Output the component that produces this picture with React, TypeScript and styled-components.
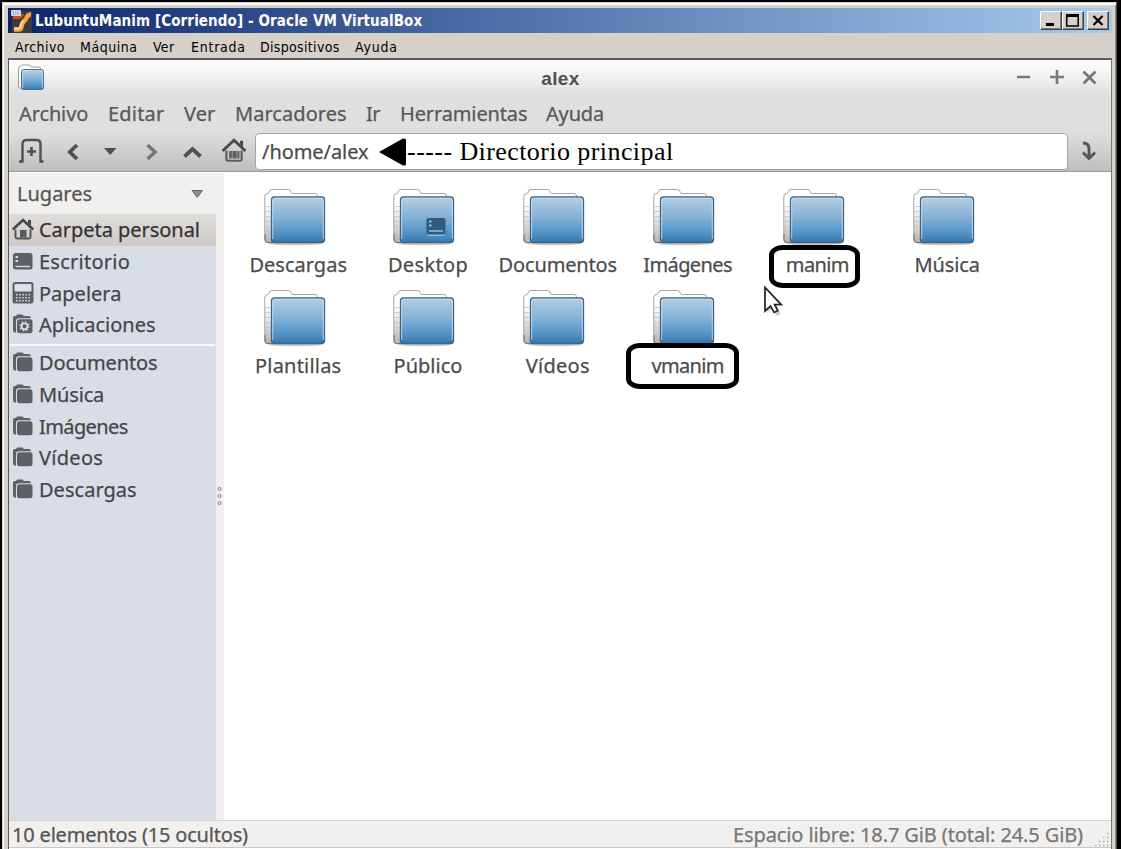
import React from 'react';
import styled, { createGlobalStyle } from 'styled-components';

const GlobalStyle = createGlobalStyle`
  * { box-sizing: border-box; }
  body { margin: 0; background: #000; overflow: hidden; }
`;

const Desktop = styled.div`
  width: 1121px;
  height: 849px;
  padding: 2px 4px 0 2px;
  background: #000;
  overflow: hidden;
`;

const HostWindow = styled.div`
  height: 860px;
  padding: 3px 2px 0 3px;
  background: #d5d0c8;
  border: solid;
  border-width: 1px 1px 0 1px;
  border-color: #d5d0c8 #55534f #000 #d5d0c8;
  box-shadow: inset 1px 2px 0 #fff, inset -1px 0 0 #8a8782;
`;

const HostTitleBar = styled.div`
  display: flex;
  align-items: center;
  height: 25px;
  margin: 2px 2px 0 2px;
  padding: 0 3px 0 2px;
  background: linear-gradient(90deg, #0b256c, #a6caf0);
`;

const HostTitle = styled.h1`
  flex: 1;
  margin: 2px 0 0 2px;
  color: #fff;
  font: bold 15px/25px 'DejaVu Sans Condensed', 'DejaVu Sans', sans-serif;
  letter-spacing: 0.1px;
  white-space: nowrap;
`;

const CaptionButton = styled.button<{ $gap?: boolean }>`
  display: block;
  width: 22px;
  height: 19px;
  padding: 0;
  margin-left: ${(p) => (p.$gap ? 3 : 0)}px;
  background: #d5d0c8;
  border: 1px solid;
  border-color: #fff #404040 #404040 #fff;
  box-shadow: inset -1px -1px 0 #808080;
  svg { display: block; }
`;

const HostMenu = styled.nav`
  display: flex;
  height: 25px;
  padding-left: 9px;
  color: #000;
  font: 14px/28px 'DejaVu Sans Condensed', 'DejaVu Sans', sans-serif;
`;

const HostMenuItem = styled.span<{ $w: number; $ls: number }>`
  width: ${(p) => p.$w}px;
  letter-spacing: ${(p) => p.$ls}px;
  white-space: nowrap;
`;

const Guest = styled.div`
  display: flex;
  flex-direction: column;
  height: 791px;
  margin: 0 2px 0 2px;
  border: 1px solid #5c5b5a;
  border-width: 2px 1px 0 1px;
  border-right-color: #777;
  background: #fff;
  color: #4c4c4c;
  font: 20px/32px 'Noto Sans', sans-serif;
  -webkit-text-stroke: 0.25px;
`;

const GuestTitleBar = styled.header`
  display: flex;
  align-items: center;
  height: 34px;
  padding: 0 13px 0 8px;
  background: linear-gradient(#fff, #f4f4f4 40%, #e0e0e0);
`;

const GuestTitle = styled.h2`
  flex: 1;
  margin: 4px 0 0 11px;
  padding-left: 49px;
  text-align: center;
  color: #505050;
  font: bold 19px/32px 'Liberation Sans', sans-serif;
  letter-spacing: 0.4px;
  -webkit-text-stroke: 0;
`;

const GuestMenu = styled.nav`
  display: flex;
  height: 38px;
  padding: 4px 0 0 10px;
  background: #dfdfdf;
  color: #585858;
`;

const GuestMenuItem = styled.span<{ $w: number; $ls: number }>`
  width: ${(p) => p.$w}px;
  letter-spacing: ${(p) => p.$ls}px;
  line-height: 32px;
  white-space: nowrap;
`;

const Toolbar = styled.div`
  display: flex;
  align-items: center;
  height: 40px;
  padding-right: 43px;
  background: linear-gradient(#dfdfdf, #bebebe);
  border-bottom: 1px solid #999;
  position: relative;
`;

const ToolIcons = styled.div`
  width: 246px;
  height: 39px;
  svg { display: block; }
`;

const PathField = styled.div`
  flex: 1;
  display: flex;
  align-items: center;
  position: relative;
  height: 37px;
  margin-top: -1px;
  padding: 1px 0 0 6px;
  background: #fff;
  border: 1px solid #a5a5a5;
  border-radius: 4px;
  letter-spacing: -0.06px;
  color: #4b4b4b;
`;

const PathNote = styled.div`
  position: absolute;
  left: 123px;
  top: 0;
  height: 35px;
  padding-left: 19px;
  color: #000;
  font: 26px/35px 'Liberation Serif', serif;
  letter-spacing: 0.42px;
  white-space: nowrap;
  -webkit-text-stroke: 0;
  svg { position: absolute; left: 0; top: 4px; }
`;

const GoIcon = styled.svg`
  position: absolute;
  right: 13px;
  top: 7px;
`;

const Body = styled.div`
  display: flex;
  height: 647px;
  margin-top: 1px;
`;

const Sidebar = styled.aside`
  width: 215px;
  padding-right: 8px;
  background: #f1f0ee;
  position: relative;
`;

const PlacesHeader = styled.div`
  display: flex;
  align-items: center;
  justify-content: space-between;
  height: 41px;
  padding: 1px 12px 0 8px;
  color: #555;
`;

const PlacesList = styled.div`
  height: 606px;
  background: #d9dee6;
`;

const Place = styled.div<{ $active?: boolean; $ls: number }>`
  display: flex;
  align-items: center;
  gap: 4px;
  height: 31.8px;
  padding-left: 3px;
  background: ${(p) => (p.$active ? 'linear-gradient(#dedcda, #cfcac6)' : 'transparent')};
  color: ${(p) => (p.$active ? '#333' : '#464646')};
  letter-spacing: ${(p) => p.$ls}px;
  white-space: nowrap;
`;

const Separator = styled.div`
  height: 2px;
  margin: 3px 1px 1px;
  background: #fafafa;
`;

const Grip = styled.svg`
  position: absolute;
  right: 0;
  top: 312px;
`;

const Files = styled.main`
  display: grid;
  grid-template-columns: repeat(6, 129.8px);
  grid-auto-rows: 100.7px;
  align-content: start;
  flex: 1;
  padding: 15px 0 0 9.3px;
  background: #fff;
`;

const File = styled.div<{ $ls: number }>`
  display: flex;
  flex-direction: column;
  align-items: center;
  position: relative;
  letter-spacing: ${(p) => p.$ls}px;
`;

const FileName = styled.span`
  margin-top: 2px;
  line-height: 32px;
  white-space: nowrap;
`;

const Ring = styled.div<{ $x: number; $w: number; $h: number; $y: number }>`
  position: absolute;
  left: ${(p) => p.$x}px;
  top: ${(p) => p.$y}px;
  width: ${(p) => p.$w}px;
  height: ${(p) => p.$h}px;
  border: 5px solid #000;
  border-radius: 14px / 10px;
`;

const Pointer = styled.svg`
  position: absolute;
  left: 762px;
  top: 284px;
`;

const StatusBar = styled.footer`
  display: flex;
  justify-content: space-between;
  height: 28px;
  padding: 0 28px 0 3px;
  background: #f1f0ee;
  border-bottom: 1px solid #c9c8c6;
  box-shadow: inset 0 1px 0 #d2d1cf;
  line-height: 29px;
  color: #555;
  position: relative;
`;

const StatusText = styled.span<{ $ls: number; $dim?: boolean }>`
  letter-spacing: ${(p) => p.$ls}px;
  color: ${(p) => (p.$dim ? '#777' : '#555')};
  white-space: nowrap;
`;

const SizeGrip = styled.svg`
  position: absolute;
  right: 1px;
  bottom: 0;
`;

function FolderDefs() {
  return (
    <defs>
      <linearGradient id="blue" x1="0" y1="0" x2="0" y2="1">
        <stop offset="0" stopColor="#b3cee4" />
        <stop offset="0.45" stopColor="#84b1d5" />
        <stop offset="0.75" stopColor="#5797c9" />
        <stop offset="1" stopColor="#3777aa" />
      </linearGradient>
      <linearGradient id="spine" x1="0" y1="0" x2="0" y2="1">
        <stop offset="0.3" stopColor="#fff" />
        <stop offset="1" stopColor="#b5b5b5" />
      </linearGradient>
    </defs>
  );
}

function Folder({ desktop }: { desktop?: boolean }) {
  return (
    <svg width="69" height="59" viewBox="0 0 69 59">
      <FolderDefs />
      <ellipse cx="31" cy="55.5" rx="27" ry="1.8" fill="#000" opacity="0.22" />
      <path d="M.8 52V8.500q0-3 3-3q1.200 0 1.700-2.500q.4-1.500 2.500-1.500h16.500q2 0 2.400 1.800q.4 2.200 2 2.200h22q2.600 0 2.600 2.500V50H7v4.500H3.500Q.8 54.500.8 52z" fill="url(#spine)" stroke="#a4a4a4" />
      <path d="M1.500 18.500h5M1.500 23.500h5M1.500 28.500h5M1.500 33.500h5M1.500 38.500h5M1.500 43.500h5" stroke="#c9c9c9" />
      <path d="M1 46v5.500q0 3 3 3h5" fill="none" stroke="#6d737a" />
      <rect x="7.500" y="9" width="53" height="45.500" rx="3" fill="url(#blue)" stroke="#3c6486" strokeWidth="1.300" />
      <path d="M8.700 51V12q0-1.800 1.800-1.800h47q1.800 0 1.800 1.800v39" fill="none" stroke="#d4e5f3" strokeOpacity="0.75" />
      {desktop && (
        <g>
          <rect x="33.500" y="30" width="19" height="16" rx="2" fill="#315b7d" />
          <path d="M35 47.500h16.500" stroke="#8fbbdc" />
          <path d="M36 33.500h2.500M36 37.500h2.500" stroke="#9cc3e1" strokeWidth="2.200" />
          <path d="M36 43h14" stroke="#9cc3e1" strokeWidth="1.500" />
        </g>
      )}
    </svg>
  );
}

function TitleFolder() {
  return (
    <svg width="28" height="28" viewBox="0 0 28 28">
      <path d="M1.500 24V5.500q0-2 2-2l1-1.500h8l1.500 2h7.500q2 0 2 2V25h-20q-2 0-2-1z" fill="#fff" stroke="#9b9b9b" />
      <rect x="4.500" y="6.500" width="22" height="20" rx="2" fill="url(#blue)" stroke="#4a7294" />
      <path d="M5.700 25V7.700h19.600V25" fill="none" stroke="#cde0f0" strokeOpacity=".7" />
    </svg>
  );
}

type PlaceKind = 'home' | 'desktop' | 'trash' | 'apps' | 'folder';

function HomeShape() {
  return (
    <g>
      <path d="M1 12.500L11.500 2.500L22 12.500" fill="none" stroke="#4b4b4b" strokeWidth="2.600" />
      <path d="M17 3h2.800v6L17 6.500z" fill="#4b4b4b" />
      <path d="M4.500 12v8q0 1.500 1.500 1.500h11q1.500 0 1.500-1.500v-8" fill="none" stroke="#5c5c5c" strokeWidth="2" />
      <path d="M7 12.500h2.500v7H7zM10 12.500h4v7h-4zM14.500 12.500H16.500v7h-2z" fill="#606060" />
    </g>
  );
}

function PlaceIcon({ kind }: { kind: PlaceKind }) {
  return (
    <svg width="23" height="24" viewBox="0 0 23 24">
      {kind === 'home' && (
        <g>
          <path d="M.8 11.500L11 2L21.200 11.500" fill="none" stroke="#464646" strokeWidth="2.500" />
          <path d="M16 2h3v6l-3-3z" fill="#464646" />
          <path d="M3.500 11.500v7.500q0 1.500 1.500 1.500h12q1.500 0 1.500-1.500V11.500" fill="none" stroke="#555" strokeWidth="1.900" />
          <path d="M8 12h6.500V19.500H8z" fill="#5a5a5a" />
        </g>
      )}
      {kind === 'desktop' && (
        <g>
          <rect x="1" y="3" width="19.500" height="16.500" rx="2.500" fill="#5f6062" />
          <path d="M3.500 7H6M3.500 11H6" stroke="#d9dee6" strokeWidth="2" />
          <path d="M3.500 16.500h14.500" stroke="#d9dee6" strokeWidth="1.400" />
        </g>
      )}
      {kind === 'trash' && (
        <g>
          <path d="M3 1h16q2.500 0 2.500 2.500V20q0 2.500-2.500 2.500H3Q.5 22.500.5 20V3.500Q.5 1 3 1z" fill="#5f6062" />
          <rect x="2.500" y="3" width="17" height="7.500" rx="1" fill="#dce0e7" />
          <path d="M4 13.800h14M4 16.800h14M4 19.800h14" stroke="#d9dee6" strokeWidth="1.500" strokeDasharray="1.500 1.600" />
        </g>
      )}
      {(kind === 'folder' || kind === 'apps') && (
        <g>
          <path d="M1 17V5Q1 3 3 3h1l1-1.500h5.500L12 3h4.500q2.500 0 2.500 2.300H7Q4 5.300 4 8v11.800Q1 19.800 1 17z" fill="#5f6062" />
          <rect x="5" y="6.300" width="15.500" height="14" rx="2.500" fill="#5f6062" />
          {kind === 'apps' && (
            <g fill="none" stroke="#d9dee6">
              <circle cx="12.500" cy="13.300" r="3" strokeWidth="1.800" />
              <circle cx="12.500" cy="13.300" r="4.400" strokeWidth="1.200" strokeDasharray="1.500 1.960" />
            </g>
          )}
        </g>
      )}
    </svg>
  );
}

const hostMenu: [string, number, number][] = [
  ['Archivo', 65, 0.4],
  ['Máquina', 73, 0.55],
  ['Ver', 38, 0.3],
  ['Entrada', 69, 0.75],
  ['Dispositivos', 95, 0.33],
  ['Ayuda', 60, 0.8],
];

const guestMenu: [string, number, number][] = [
  ['Archivo', 89, -0.12],
  ['Editar', 76, 0.2],
  ['Ver', 51, 0.06],
  ['Marcadores', 131, 0.05],
  ['Ir', 34, -0.6],
  ['Herramientas', 146, -0.13],
  ['Ayuda', 70, -0.16],
];

const places: [string, PlaceKind, number][] = [
  ['Carpeta personal', 'home', -0.04],
  ['Escritorio', 'desktop', 0.25],
  ['Papelera', 'trash', 0],
  ['Aplicaciones', 'apps', 0.03],
];

const bookmarks: [string, number][] = [
  ['Documentos', -0.15],
  ['Música', -0.15],
  ['Imágenes', -0.6],
  ['Vídeos', 0.3],
  ['Descargas', 0.02],
];

const files: [string, number][] = [
  ['Descargas', 0.02],
  ['Desktop', 0.35],
  ['Documentos', -0.15],
  ['Imágenes', -0.6],
  ['manim', -0.6],
  ['Música', -0.1],
  ['Plantillas', 0.2],
  ['Público', 0],
  ['Vídeos', 0.3],
  ['vmanim', -0.7],
];

export default function App() {
  return (
    <Desktop>
      <GlobalStyle />
      <HostWindow>
        <HostTitleBar>
          <svg width="23" height="24" viewBox="0 0 23 24">
            <rect x="2" y="2" width="20" height="22" fill="#3a3b41" />
            <path d="M3 8h4q4 0 5-3" fill="none" stroke="#d9481c" strokeWidth="4" />
            <path d="M4 20.500h4.500q2.500 0 3-3t2.500-5.500q2-1.500 3-4t4-2.500" fill="none" stroke="#f5a63c" strokeWidth="4.600" />
            <path d="M4 19.500h4.500q1.500 0 2-2.500t2.500-5.500" fill="none" stroke="#fbd9a4" strokeWidth="1.800" />
            <rect x="1" y="1" width="10" height="6" rx="1" fill="#d3d8e2" />
            <path d="M2.500 3h7M2.500 5h7" stroke="#8a91a2" strokeDasharray="1.500 1" />
          </svg>
          <HostTitle>LubuntuManim [Corriendo] - Oracle VM VirtualBox</HostTitle>
          <CaptionButton aria-label="Minimizar">
            <svg width="20" height="17"><path d="M5 12.500h8" stroke="#000" strokeWidth="3" /></svg>
          </CaptionButton>
          <CaptionButton aria-label="Maximizar">
            <svg width="20" height="17">
              <path d="M3 3.500h13" stroke="#000" strokeWidth="3" />
              <rect x="3.700" y="3" width="11.500" height="11" fill="none" stroke="#000" strokeWidth="1.500" />
            </svg>
          </CaptionButton>
          <CaptionButton $gap aria-label="Cerrar">
            <svg width="20" height="17"><path d="M5.500 4l9 9M14.500 4l-9 9" stroke="#000" strokeWidth="2.200" /></svg>
          </CaptionButton>
        </HostTitleBar>
        <HostMenu>
          {hostMenu.map(([name, w, ls]) => (
            <HostMenuItem key={name} $w={w} $ls={ls}>{name}</HostMenuItem>
          ))}
        </HostMenu>
        <Guest>
          <GuestTitleBar>
            <TitleFolder />
            <GuestTitle>alex</GuestTitle>
            <svg width="82" height="18" viewBox="0 0 82 18">
              <g stroke="#777" fill="none">
                <path d="M1 9h13" strokeWidth="2.400" />
                <path d="M34 9h14M41 2v14" strokeWidth="2.600" />
                <path d="M67.500 3.500l12 12M79.500 3.500l-12 12" strokeWidth="2.800" />
              </g>
            </svg>
          </GuestTitleBar>
          <GuestMenu>
            {guestMenu.map(([name, w, ls]) => (
              <GuestMenuItem key={name} $w={w} $ls={ls}>{name}</GuestMenuItem>
            ))}
          </GuestMenu>
          <Toolbar>
            <ToolIcons>
              <svg width="246" height="39" viewBox="0 0 246 39">
                <g fill="none" stroke="#505050">
                  <path d="M10 29.500h3.500V12q0-4 4-4h10q4 0 4 4v17.500H34.500" strokeWidth="2.400" />
                  <path d="M18 19.500h9M22.500 15v9" strokeWidth="2.600" />
                  <path d="M68 13L60.800 20L68 27" strokeWidth="3.800" />
                  <path d="M138.500 13l7.500 7l-7.500 7" strokeWidth="3.600" stroke="#777" />
                  <path d="M175.500 24.500l8-7.500l8 7.500" strokeWidth="3.800" />
                </g>
                <path d="M95 16h12.500l-6.300 7z" fill="#505050" />
                <g transform="translate(212.500 5.500) scale(1.090 1.080)"><HomeShape /></g>
              </svg>
            </ToolIcons>
            <PathField>
              /home/alex
              <PathNote>
                <svg width="28" height="28" viewBox="0 0 28 28"><path d="M0 14L24 .5Q27 0 27 2v24q0 2-3 1.500z" fill="#000" /></svg>
                ------ Directorio principal
              </PathNote>
            </PathField>
            <GoIcon width="20" height="24" viewBox="0 0 20 24">
              <path d="M5 4q6 0 6 6v8M5 13.500l6 6L17 13.500" fill="none" stroke="#555" strokeWidth="2.900" />
            </GoIcon>
          </Toolbar>
          <Body>
            <Sidebar>
              <PlacesHeader>
                Lugares
                <svg width="13" height="10"><path d="M1 1.500h10.500L6.200 8.500z" fill="#8b8b8b" stroke="#666" /></svg>
              </PlacesHeader>
              <PlacesList>
                {places.map(([name, kind, ls], i) => (
                  <Place key={name} $active={i === 0} $ls={ls}><PlaceIcon kind={kind} />{name}</Place>
                ))}
                <Separator />
                {bookmarks.map(([name, ls]) => (
                  <Place key={name} $ls={ls}><PlaceIcon kind="folder" />{name}</Place>
                ))}
              </PlacesList>
              <Grip width="9" height="22" viewBox="0 0 9 22">
                <g fill="#fff" stroke="#777">
                  <circle cx="4.500" cy="4" r="1.500" /><circle cx="4.500" cy="11" r="1.500" /><circle cx="4.500" cy="18" r="1.500" />
                </g>
              </Grip>
            </Sidebar>
            <Files>
              {files.map(([name, ls]) => (
                <File key={name} $ls={ls}>
                  <Folder desktop={name === 'Desktop'} />
                  <FileName>{name}</FileName>
                  {name === 'manim' && <Ring $x={16.500} $y={57} $w={91} $h={43} />}
                  {name === 'vmanim' && <Ring $x={3.600} $y={54.300} $w={113} $h={46} />}
                </File>
              ))}
            </Files>
          </Body>
          <StatusBar>
            <StatusText $ls={-0.18}>10 elementos (15 ocultos)</StatusText>
            <StatusText $ls={-0.11} $dim>Espacio libre: 18.7 GiB (total: 24.5 GiB)</StatusText>
            <SizeGrip width="16" height="17" viewBox="0 0 16 17">
              <path d="M1 15.500h14M5 11.500h10M9 7.500h6M13 3.500h2" stroke="#aaa" strokeWidth="1.500" strokeDasharray="1.500 2.500" />
            </SizeGrip>
          </StatusBar>
        </Guest>
      </HostWindow>
      <Pointer width="28" height="34" viewBox="0 0 28 34">
        <path d="M5 5v24l5.500-5l4 8l4-2l-4-8H22z" fill="#000" opacity="0.2" />
        <path d="M3 3.500V27l5.500-5l3.700 6.500l3.600-1.800L12.600 20.500h6.400z" fill="#fff" stroke="#222" strokeWidth="1.700" />
      </Pointer>
    </Desktop>
  );
}
